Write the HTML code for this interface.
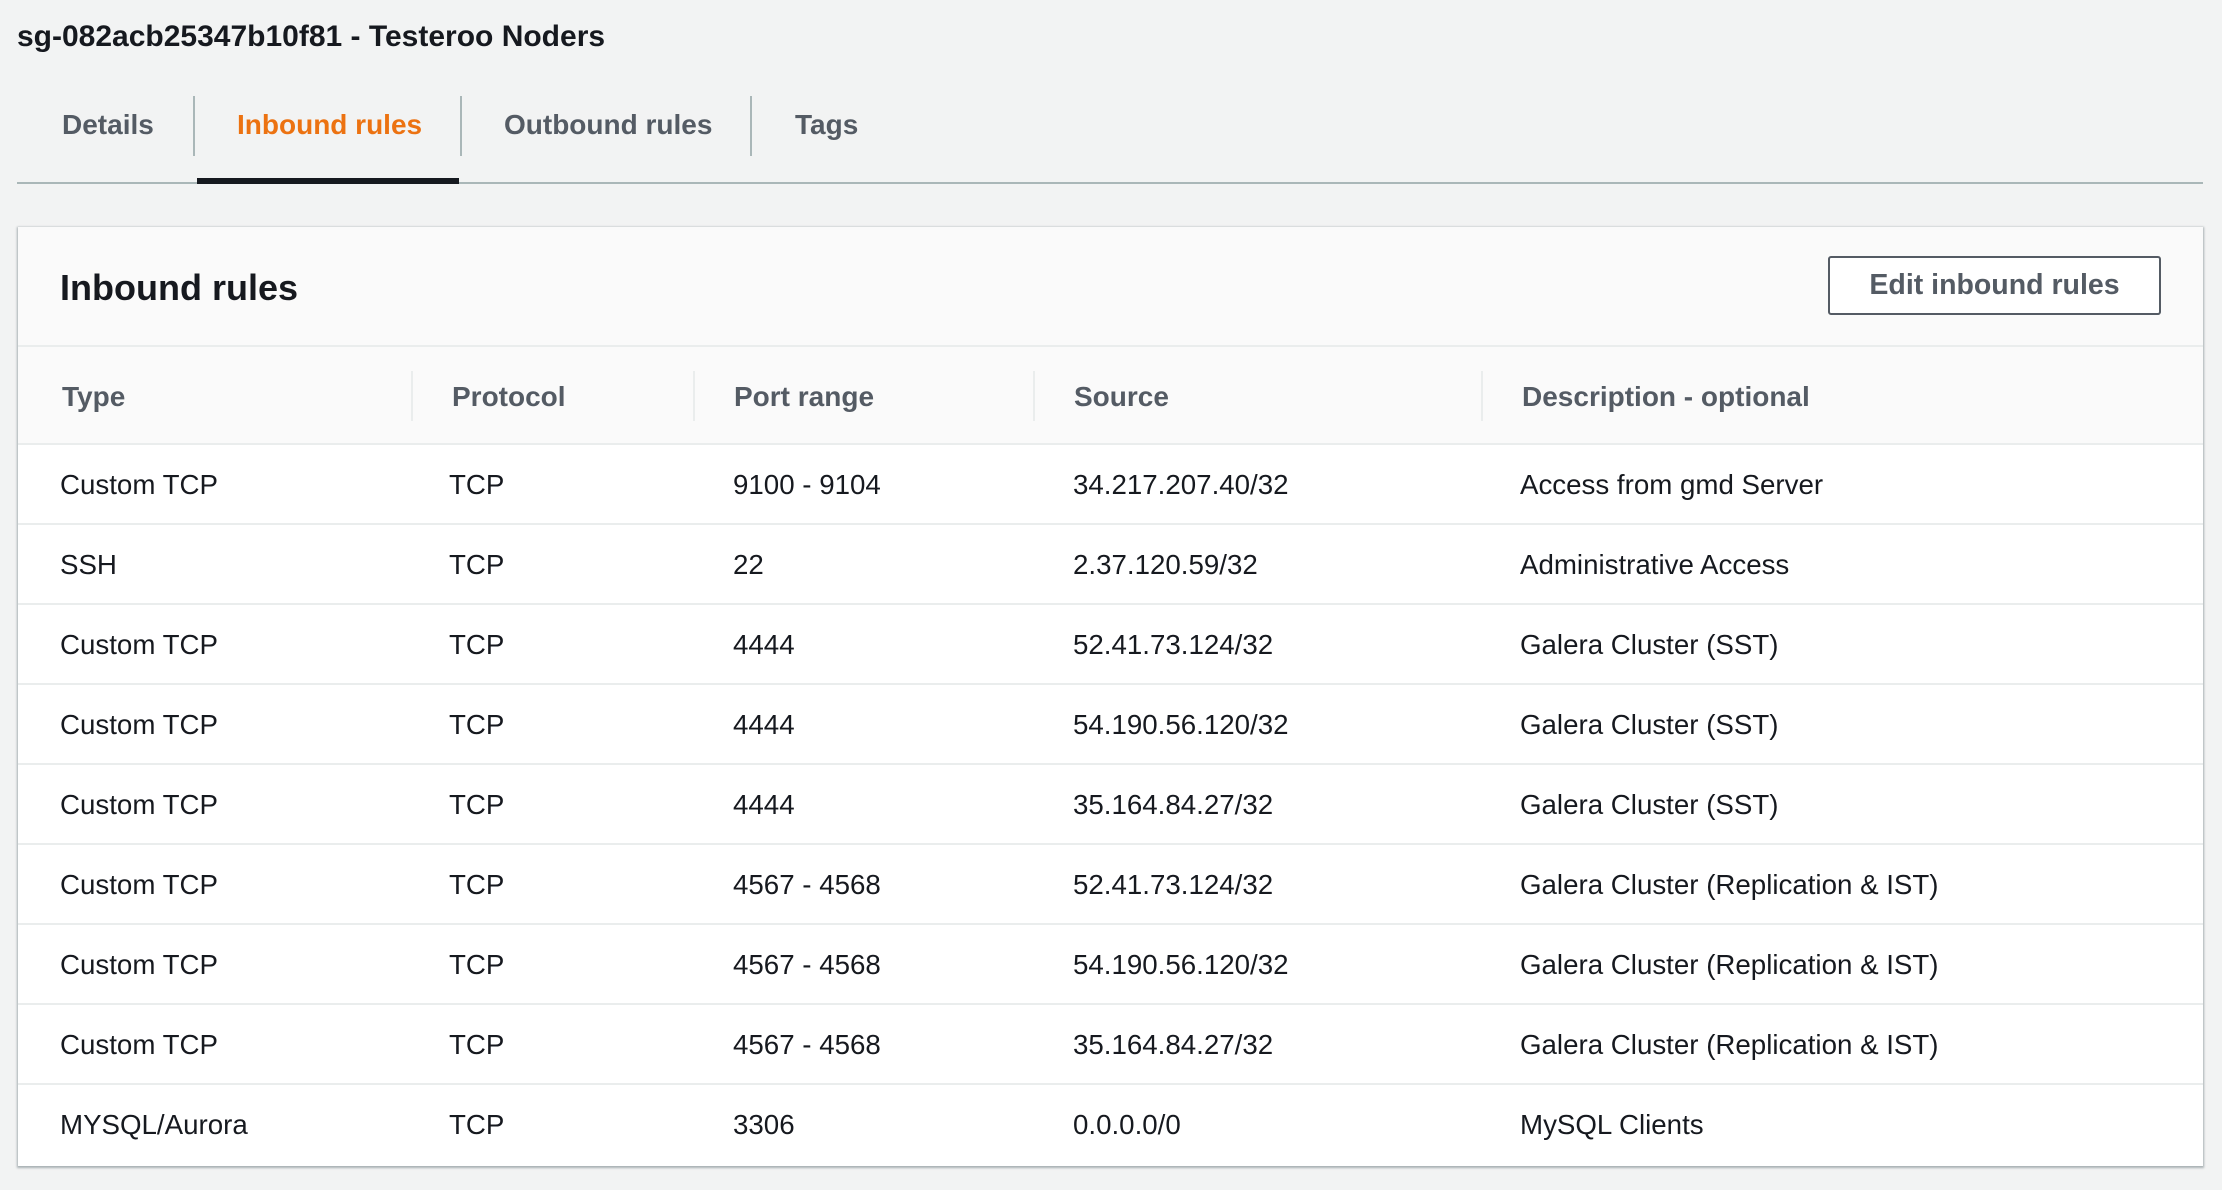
<!DOCTYPE html>
<html><head><meta charset="utf-8"><style>
*{margin:0;padding:0;box-sizing:border-box}
body{width:2222px;height:1190px;background:#f2f3f3;font-family:"Liberation Sans",sans-serif;position:relative;overflow:hidden;color:#16191f}
.abs{position:absolute;white-space:nowrap}
.title{left:17px;top:20px;font-size:30px;font-weight:bold;color:#16191f}
.tab{top:109px;font-size:28px;font-weight:bold;color:#545b64}
.sep{position:absolute;top:96px;width:2px;height:60px;background:#aab7b8}
.card{position:absolute;left:18px;top:227px;width:2185px;height:939px;background:#fff;box-shadow:0 1px 2px 1px rgba(0,28,36,.3);overflow:hidden}
.hdr{position:absolute;left:0;top:0;width:100%;height:120px;background:#fafafa;border-bottom:2px solid #eaeded}
.colh{position:absolute;left:0;top:120px;width:100%;height:98px;background:#fafafa;border-bottom:2px solid #eaeded}
.btn{position:absolute;left:1810px;top:29px;width:333px;height:59px;border:2px solid #545b64;border-radius:3px;background:#fff;font-size:28.5px;font-weight:bold;color:#545b64;text-align:center;line-height:55px}
.ch{position:absolute;top:34px;font-size:28px;font-weight:bold;color:#545b64}
.cs{position:absolute;top:24px;width:2px;height:50px;background:#eaeded}
.row{position:absolute;left:0;width:100%;height:80px;border-bottom:2px solid #eaeded;font-size:27.7px}
.row span{position:absolute;top:24px}
</style></head><body>
<div class="abs title">sg-082acb25347b10f81 - Testeroo Noders</div>
<div class="abs tab" style="left:62px">Details</div>
<div class="abs tab" style="left:237px;color:#ec7211">Inbound rules</div>
<div class="abs tab" style="left:504px">Outbound rules</div>
<div class="abs tab" style="left:795px">Tags</div>
<div class="sep" style="left:193px"></div>
<div class="sep" style="left:460px"></div>
<div class="sep" style="left:750px"></div>
<div class="abs" style="left:17px;top:182px;width:2186px;height:2px;background:#aab7b8"></div>
<div class="abs" style="left:197px;top:178px;width:262px;height:6px;background:#16191f"></div>
<div class="card">
 <div class="hdr">
  <div class="abs" style="left:42px;top:40px;font-size:36px;font-weight:bold;color:#16191f">Inbound rules</div>
  <div class="btn">Edit inbound rules</div>
 </div>
 <div class="colh">
  <div class="ch" style="left:44px">Type</div>
  <div class="cs" style="left:393px"></div>
  <div class="ch" style="left:434px">Protocol</div>
  <div class="cs" style="left:675px"></div>
  <div class="ch" style="left:716px">Port range</div>
  <div class="cs" style="left:1015px"></div>
  <div class="ch" style="left:1056px">Source</div>
  <div class="cs" style="left:1463px"></div>
  <div class="ch" style="left:1504px">Description - optional</div>
 </div>
 <div class="row" style="top:218px"><span style="left:42px">Custom TCP</span><span style="left:431px">TCP</span><span style="left:715px">9100 - 9104</span><span style="left:1055px">34.217.207.40/32</span><span style="left:1502px">Access from gmd Server</span></div>
 <div class="row" style="top:298px"><span style="left:42px">SSH</span><span style="left:431px">TCP</span><span style="left:715px">22</span><span style="left:1055px">2.37.120.59/32</span><span style="left:1502px">Administrative Access</span></div>
 <div class="row" style="top:378px"><span style="left:42px">Custom TCP</span><span style="left:431px">TCP</span><span style="left:715px">4444</span><span style="left:1055px">52.41.73.124/32</span><span style="left:1502px">Galera Cluster (SST)</span></div>
 <div class="row" style="top:458px"><span style="left:42px">Custom TCP</span><span style="left:431px">TCP</span><span style="left:715px">4444</span><span style="left:1055px">54.190.56.120/32</span><span style="left:1502px">Galera Cluster (SST)</span></div>
 <div class="row" style="top:538px"><span style="left:42px">Custom TCP</span><span style="left:431px">TCP</span><span style="left:715px">4444</span><span style="left:1055px">35.164.84.27/32</span><span style="left:1502px">Galera Cluster (SST)</span></div>
 <div class="row" style="top:618px"><span style="left:42px">Custom TCP</span><span style="left:431px">TCP</span><span style="left:715px">4567 - 4568</span><span style="left:1055px">52.41.73.124/32</span><span style="left:1502px">Galera Cluster (Replication &amp; IST)</span></div>
 <div class="row" style="top:698px"><span style="left:42px">Custom TCP</span><span style="left:431px">TCP</span><span style="left:715px">4567 - 4568</span><span style="left:1055px">54.190.56.120/32</span><span style="left:1502px">Galera Cluster (Replication &amp; IST)</span></div>
 <div class="row" style="top:778px"><span style="left:42px">Custom TCP</span><span style="left:431px">TCP</span><span style="left:715px">4567 - 4568</span><span style="left:1055px">35.164.84.27/32</span><span style="left:1502px">Galera Cluster (Replication &amp; IST)</span></div>
 <div class="row" style="top:858px;border-bottom:none"><span style="left:42px">MYSQL/Aurora</span><span style="left:431px">TCP</span><span style="left:715px">3306</span><span style="left:1055px">0.0.0.0/0</span><span style="left:1502px">MySQL Clients</span></div>
</div>
</body></html>
